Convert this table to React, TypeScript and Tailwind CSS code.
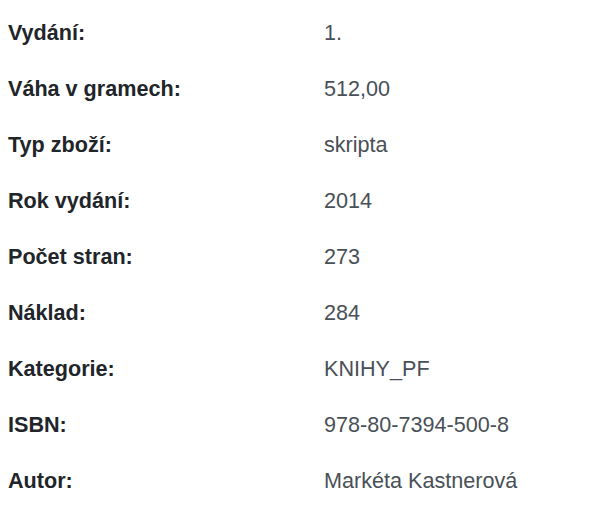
import React from 'react'

const rows: [string, string][] = [
  ['Vydání:', '1.'],
  ['Váha v gramech:', '512,00'],
  ['Typ zboží:', 'skripta'],
  ['Rok vydání:', '2014'],
  ['Počet stran:', '273'],
  ['Náklad:', '284'],
  ['Kategorie:', 'KNIHY_PF'],
  ['ISBN:', '978-80-7394-500-8'],
  ['Autor:', 'Markéta Kastnerová'],
]

const App: React.FC = () => {
  return (
    <div className="w-[600px] h-[508px] bg-white px-2 pt-[5px] font-['Liberation_Sans',Arial,sans-serif] text-[21.6px] leading-[1.5]">
      {rows.map(([label, value]) => (
        <div key={label} className="flex items-center h-14">
          <div className="w-[316px] shrink-0 font-bold text-[#212529]">{label}</div>
          <div className="text-[#495057]">{value}</div>
        </div>
      ))}
    </div>
  )
}

export default App
